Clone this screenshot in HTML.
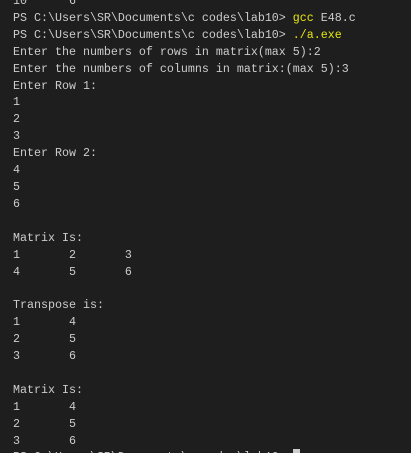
<!DOCTYPE html>
<html><head><meta charset="utf-8"><style>
html,body{margin:0;padding:0;background:#1e1e1e;width:411px;height:453px;overflow:hidden;position:relative}
pre{position:absolute;left:13px;top:-7px;margin:0;font-family:"Liberation Mono",monospace;font-size:11.67px;line-height:16.9px;color:#cccccc;tab-size:8;-moz-tab-size:8;white-space:pre}
.y{color:#e5e510}
.c{display:inline-block;width:7px;height:13px;background:#cccccc;vertical-align:-2px}
</style></head><body><pre>10      6
PS C:\Users\SR\Documents\c codes\lab10&gt; <span class="y">gcc</span> E48.c
PS C:\Users\SR\Documents\c codes\lab10&gt; <span class="y">./a.exe</span>
Enter the numbers of rows in matrix(max 5):2
Enter the numbers of columns in matrix:(max 5):3
Enter Row 1:
1
2
3
Enter Row 2:
4
5
6

Matrix Is:
1	2	3
4	5	6

Transpose is:
1	4
2	5
3	6

Matrix Is:
1	4
2	5
3	6
PS C:\Users\SR\Documents\c codes\lab10&gt; <span class="c"></span></pre></body></html>
